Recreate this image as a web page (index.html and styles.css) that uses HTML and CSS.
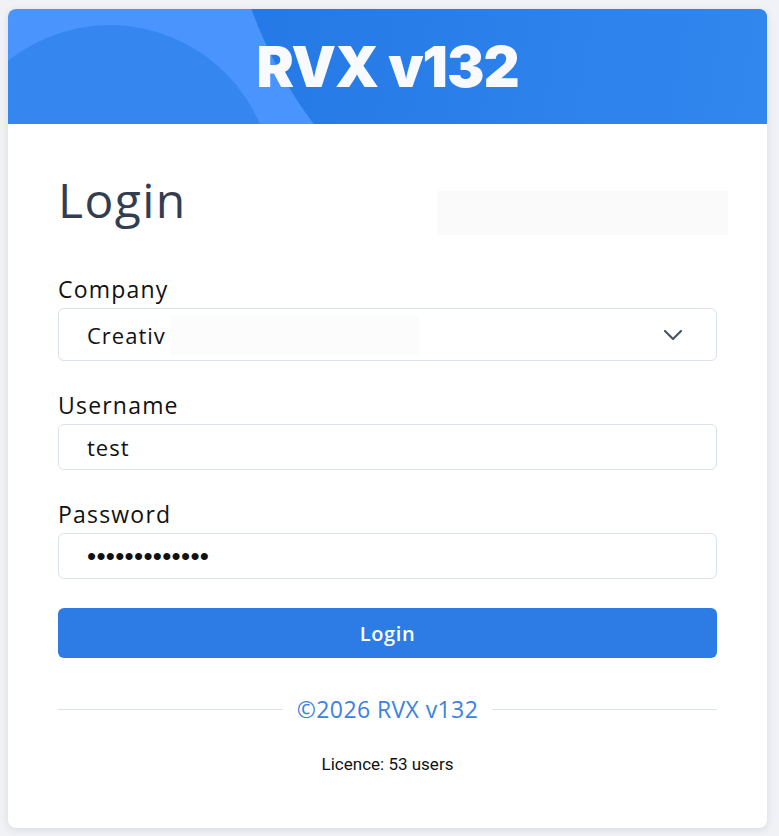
FILE: index.html
```html
<!DOCTYPE html>
<html lang="en">
<head>
<meta charset="utf-8">
<title>RVX v132 - Login</title>
<link rel="stylesheet" href="styles.css">
</head>
<body>
<div class="card">
  <header class="card-header">
    <span class="bubble bubble-left"></span>
    <span class="bubble bubble-right"></span>
    <h1 class="brand">RVX v132</h1>
  </header>
  <main class="card-body">
    <div class="title-row">
      <h2 class="title">Login</h2>
      <div class="redact redact-title"></div>
    </div>
    <form class="form">
      <div class="field">
        <label class="label">Company</label>
        <div class="control select">
          <span class="value">Creativ</span>
          <span class="redact redact-select"></span>
          <svg class="chevron" width="20" height="12" viewBox="0 0 20 12" fill="none"><path d="M2 2l8 8 8-8" stroke="#4b5563" stroke-width="2.2" stroke-linecap="round" stroke-linejoin="round"/></svg>
        </div>
      </div>
      <div class="field">
        <label class="label">Username</label>
        <div class="control input"><span class="value">test</span></div>
      </div>
      <div class="field">
        <label class="label">Password</label>
        <div class="control input"><span class="value dots">•••••••••••••</span></div>
      </div>
      <button type="button" class="btn">Login</button>
    </form>
    <div class="divider">
      <span class="line"></span>
      <span class="copy">©2026 RVX v132</span>
      <span class="line"></span>
    </div>
    <p class="licence">Licence: 53 users</p>
  </main>
</div>
</body>
</html>
```
FILE: styles.css
```css
* { box-sizing: border-box; }
html, body { margin: 0; }
body {
  background: #f1f2f6;
  padding: 9px 12px 8px 8px;
  font-family: "Open Sans", "Noto Sans", sans-serif;
}
.card {
  width: 759px;
  background: #fff;
  border-radius: 8px;
  overflow: hidden;
  box-shadow: 0 2px 8px rgba(20, 30, 60, 0.10);
}
.card-header {
  position: relative;
  height: 115px;
  display: flex;
  align-items: center;
  justify-content: center;
  background: #4a94fd;
  overflow: hidden;
}
.bubble {
  position: absolute;
  border-radius: 50%;
}
.bubble-left {
  width: 326px;
  height: 326px;
  left: -61px;
  top: 16px;
  background: #3686f0;
}
.bubble-right {
  width: 880px;
  height: 880px;
  left: 217px;
  top: -590px;
  background: linear-gradient(100deg, #2276e4 0%, #2a7fea 35%, #3489ef 70%);
}
.brand {
  position: relative;
  margin: 0;
  color: #f8fafe;
  font-family: Inter, "Open Sans", sans-serif;
  font-weight: 900;
  font-size: 56px;
  letter-spacing: -1px;
  line-height: 1;
}
.card-body {
  padding: 48px 50px 55px 50px;
}
.title-row {
  display: flex;
  justify-content: space-between;
  align-items: flex-start;
  height: 102px;
}
.title {
  margin: 0;
  font-weight: 400;
  font-size: 48px;
  line-height: 56px;
  letter-spacing: 1.4px;
  color: #323e4f;
}
.redact {
  background: #fafafa;
  display: block;
}
.redact-title {
  width: 291px;
  height: 44px;
  margin-top: 19px;
  margin-right: -11px;
}
.field {
  display: flex;
  flex-direction: column;
  margin-bottom: 29px;
}
.label {
  font-size: 23px;
  line-height: 30px;
  letter-spacing: 1.2px;
  margin-bottom: 4px;
  color: #111;
}
.control {
  border: 1px solid #dbe2ec;
  border-radius: 6px;
  display: flex;
  align-items: center;
  padding: 0 28px;
  font-size: 22px;
  letter-spacing: 1px;
  color: #111;
}
.select { height: 53px; }
.input { height: 46px; }
.redact-select {
  width: 249px;
  height: 40px;
  margin-left: 4px;
  background: #fcfcfc;
}
.chevron { margin-left: auto; margin-right: 5px; }
.dots {
  font-family: "Liberation Sans", Arial, sans-serif;
  font-size: 26px;
  letter-spacing: 0.3px;
}
.btn {
  display: block;
  width: 100%;
  height: 50px;
  border: 0;
  border-radius: 6px;
  background: #2d7be5;
  color: #fff;
  font-family: inherit;
  font-size: 20px;
  font-weight: 600;
  letter-spacing: 0.6px;
}
.divider {
  display: flex;
  align-items: center;
  gap: 14px;
  margin-top: 35px;
  height: 32px;
}
.line { flex: 1; height: 1px; background: #dbe2ea; }
.copy { font-size: 23px; letter-spacing: 0.4px; color: #3b82e0; }
.licence {
  margin: 30px 0 0;
  text-align: center;
  font-family: Roboto, sans-serif;
  font-size: 17px;
  line-height: 18px;
  color: #111;
}
```
